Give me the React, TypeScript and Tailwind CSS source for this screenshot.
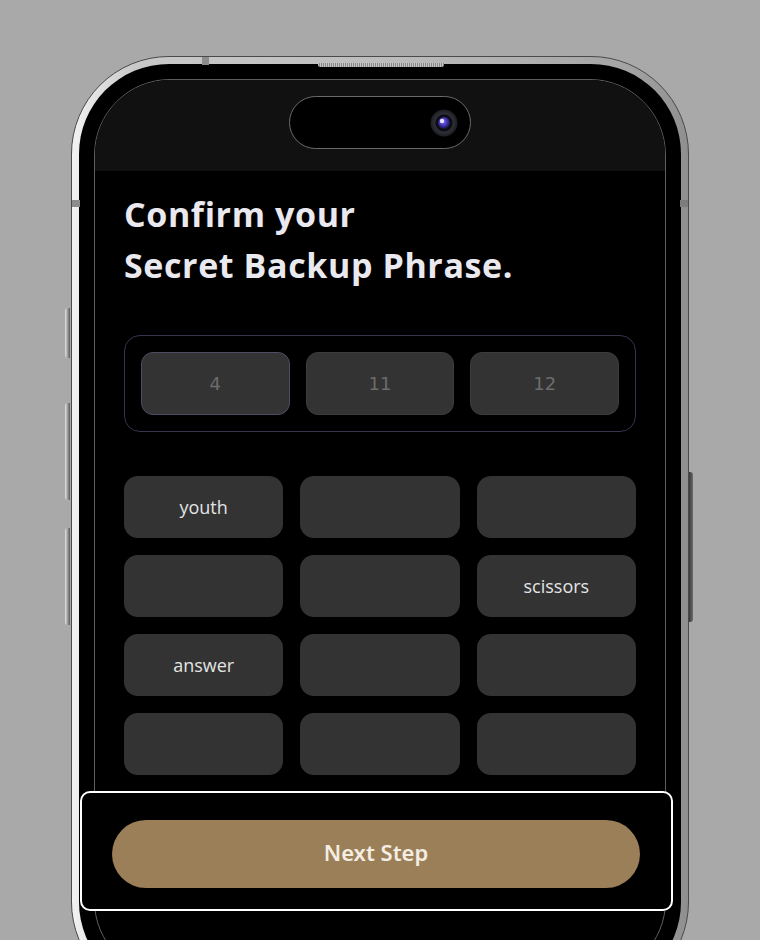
const words: string[] = ['youth', '', '', '', '', 'scissors', 'answer', '', '', '', '', ''];
const slots = ['4', '11', '12'];

function Camera() {
  return (
    <svg width="28" height="28" viewBox="0 0 28 28">
      <defs>
        <radialGradient id="camOuter" cx="50%" cy="50%" r="50%">
          <stop offset="0%" stopColor="#15151c" />
          <stop offset="70%" stopColor="#2e2e36" />
          <stop offset="100%" stopColor="#1b1b20" />
        </radialGradient>
        <radialGradient id="camLens" cx="45%" cy="40%" r="60%">
          <stop offset="0%" stopColor="#7a6cf0" />
          <stop offset="60%" stopColor="#3d2fa8" />
          <stop offset="100%" stopColor="#141030" />
        </radialGradient>
      </defs>
      <circle cx="14" cy="14" r="13.5" fill="url(#camOuter)" />
      <circle cx="14" cy="14" r="8.5" fill="#0c0c14" />
      <circle cx="14" cy="14" r="6" fill="url(#camLens)" />
      <circle cx="12" cy="12" r="2.2" fill="#e8e6ff" />
    </svg>
  );
}

export default function App() {
  return (
    <div className="relative w-[760px] h-[940px] overflow-hidden bg-[#a9a9a9]">
      {/* side buttons */}
      <div className="absolute left-[65px] top-[308px] w-[5px] h-[50px] rounded-l-[3px] bg-[linear-gradient(90deg,#e4e4e4,#5a5a5a)]" />
      <div className="absolute left-[65px] top-[403px] w-[5px] h-[97px] rounded-l-[3px] bg-[linear-gradient(90deg,#e4e4e4,#5a5a5a)]" />
      <div className="absolute left-[65px] top-[528px] w-[5px] h-[97px] rounded-l-[3px] bg-[linear-gradient(90deg,#e4e4e4,#5a5a5a)]" />
      <div className="absolute left-[689px] top-[472px] w-[4px] h-[150px] rounded-r-[3px] bg-[linear-gradient(90deg,#3a3a3a,#6a6a6a)]" />

      {/* phone */}
      <div className="relative mx-auto mt-[56px] w-[618px] h-[944px] rounded-[98px] border border-[#4a4a4a] bg-[linear-gradient(90deg,#f2f2f2_0%,#c9c9c9_10%,#bdbdbd_50%,#a4a4a4_90%,#8f8f8f_100%)] p-[7px]">
        {/* antenna bands */}
        <div className="absolute left-[130px] top-0 w-[7px] h-[8px] bg-[#8c8c8c]" />
        <div className="absolute left-0 top-[143px] w-[8px] h-[7px] bg-[#8c8c8c]" />
        <div className="absolute right-0 top-[143px] w-[8px] h-[7px] bg-[#7c7c7c]" />
        {/* speaker grille */}
        <div className="absolute left-[246px] top-[6px] w-[126px] h-[4px] rounded-b-[2px] bg-[repeating-linear-gradient(90deg,#c4c4c4_0px,#c4c4c4_1px,#8a8a8a_1px,#8a8a8a_2px)] z-10" />

        <div className="h-full rounded-[90px] bg-black p-[15px]">
          <div className="h-full overflow-hidden rounded-[76px] border border-[#5e5e5e] bg-black">
            {/* status area */}
            <div className="h-[91px] bg-[#111111] pt-[16px]">
              <div className="mx-auto flex w-[182px] h-[53px] items-center justify-end rounded-full border border-[#6a6a6a] bg-black pr-[12px]">
                <Camera />
              </div>
            </div>

            <div className="px-[29px]">
              <h1 className="mt-[18px] text-[34px] leading-[51px] font-bold tracking-[0.6px] text-[#e9e9ef] font-['Open_Sans','Liberation_Sans',sans-serif]">
                Confirm your
                <br />
                Secret Backup Phrase.
              </h1>

              <div className="mt-[44px] grid grid-cols-3 gap-[16px] rounded-[16px] border border-[#35354c] p-[16px]">
                {slots.map((s, i) => (
                  <div
                    key={s}
                    className={
                      i === 0
                        ? 'flex h-[63px] items-center justify-center rounded-[12px] border border-[#4c4c62] bg-[#333333] text-[18px] text-[#6c6c6c] font-["DejaVu_Sans",sans-serif]'
                        : 'flex h-[63px] items-center justify-center rounded-[12px] border border-[#3c3c3c] bg-[#333333] text-[18px] text-[#6c6c6c] font-["DejaVu_Sans",sans-serif]'
                    }
                  >
                    {s}
                  </div>
                ))}
              </div>

              <div className="mt-[44px] grid grid-cols-3 gap-x-[17px] gap-y-[17px]">
                {words.map((w, i) => (
                  <div
                    key={i}
                    className="flex h-[62px] items-center justify-center rounded-[14px] bg-[#333333] text-[18px] text-[#e4e4e4] font-['Open_Sans','Liberation_Sans',sans-serif]"
                  >
                    {w}
                  </div>
                ))}
              </div>
            </div>
          </div>
        </div>
      </div>

      {/* highlighted footer */}
      <div className="absolute left-[80px] top-[791px] w-[593px] h-[120px] rounded-[10px] border-2 border-white bg-black pl-[30px] pt-[27px]">
        <button className="flex w-[528px] h-[68px] items-center justify-center rounded-full bg-[#9b7f59] pb-[3px] text-[22px] font-semibold text-[#f3ede2] font-['Noto_Sans','Liberation_Sans',sans-serif]">
          Next Step
        </button>
      </div>
    </div>
  );
}
